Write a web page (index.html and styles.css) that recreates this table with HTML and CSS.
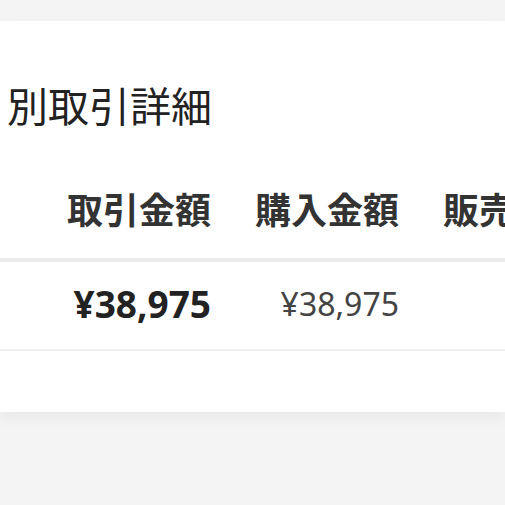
FILE: index.html
```html
<!DOCTYPE html>
<html lang="ja">
<head>
    <meta charset="UTF-8">
    <meta name="viewport" content="width=device-width, initial-scale=1.0">
    <title>別取引詳細</title>
    <link rel="stylesheet" href="styles.css">
</head>
<body>
    <div class="page">
        <div class="card">
            <h2 class="card-title">別取引詳細</h2>

            <div class="table">
                <div class="row head">
                    <div class="cell">取引金額</div>
                    <div class="cell">購入金額</div>
                    <div class="cell">販売金額</div>
                </div>
                <div class="row">
                    <div class="cell total">¥38,975</div>
                    <div class="cell">¥38,975</div>
                    <div class="cell"></div>
                </div>
            </div>
        </div>
    </div>
</body>
</html>
```

FILE: styles.css
```css
* {
    margin: 0;
    padding: 0;
    box-sizing: border-box;
}
body {
    font-family: "Noto Sans", "Noto Sans CJK JP", sans-serif;
    background: #f4f4f4;
    width: 505px;
    height: 505px;
    overflow: hidden;
}
.page {
    padding-top: 21px;
}
.card {
    background: white;
    height: 391px;
    box-shadow: 0 6px 14px rgba(0, 0, 0, 0.05);
    overflow: hidden;
}
.card-title {
    font-size: 41px;
    font-weight: 400;
    line-height: 48px;
    color: #222;
    padding: 61px 0 0 7px;
}
.table {
    margin-top: 57px;
    width: 640px;
}
.row {
    display: grid;
    grid-template-columns: 211px 188px 188px;
    padding-bottom: 4px;
    border-bottom: 2px solid #f0f0f0;
}
.row.head {
    height: 75px;
    padding-bottom: 0;
    border-bottom: 4px solid #ececec;
}
.cell {
    text-align: right;
    white-space: nowrap;
    font-size: 32px;
    line-height: 83px;
    color: #444;
}
.head .cell {
    font-size: 36px;
    font-weight: 700;
    line-height: 48px;
    color: #333;
}
.total {
    font-size: 37px;
    font-weight: 700;
    color: #222;
}
```
